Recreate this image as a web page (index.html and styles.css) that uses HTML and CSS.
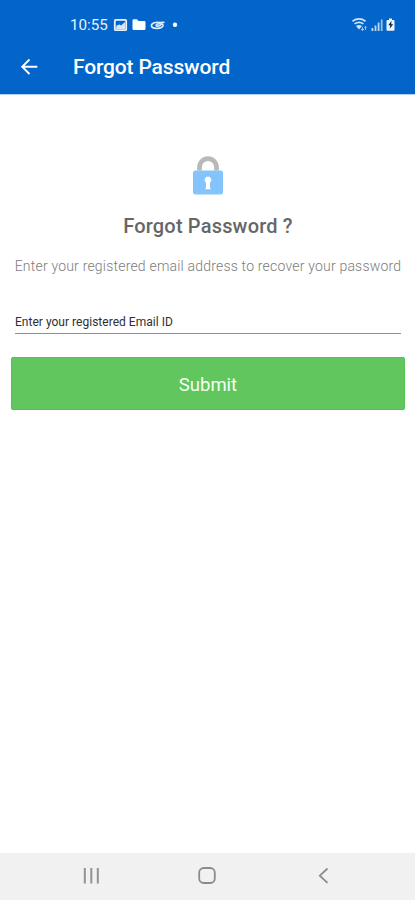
FILE: index.html
```html
<!DOCTYPE html>
<html lang="en">
<head>
<meta charset="utf-8">
<title>Forgot Password</title>
<link rel="stylesheet" href="styles.css">
</head>
<body>
<div class="screen">
  <header class="top">
    <div class="status">
      <span class="clock">10:55</span>
      <svg class="notices" width="68" height="16" viewBox="0 0 68 16">
        <rect x="1.800" y="2.800" width="11.400" height="10.400" rx="1" fill="none" stroke="#e8f2fc" stroke-width="1.800"/>
        <path d="M3 12l.500-3.500 3-1 1.500 1 4-3.500v7z" fill="#d5e7f9"/>
        <path d="M19.500 3.500q0-1.200 1.200-1.200h3.300l1.500 1.700h5.700q1.300 0 1.300 1.200v6.500q0 1.300-1.300 1.300H20.700q-1.200 0-1.200-1.300z" fill="#fff"/>
        <path d="M47 5.500C42 4.600 38 6.500 38.500 9c.600 3.300 10.500 3 11.500-.3.600-2.300-6.500-2.700-6.800-.5-.1 1.300 3.500.9 4.300 0M46.500 5.700l4.300-.3" fill="none" stroke="#dcecfb" stroke-width="1.700" stroke-linecap="round"/>
        <circle cx="62" cy="7.700" r="2.200" fill="#fff"/>
      </svg>
      <svg class="signals" width="46" height="16" viewBox="0 0 46 16">
        <g fill="none" stroke="#cfe4f8" stroke-width="1.700">
          <path d="M.5 4.200q6.500-4.600 13 0M2.500 6.900q4.500-3.200 9 0"/>
        </g>
        <path d="M4 9q3-2 6 0L7 12.500z" fill="#cfe4f8"/>
        <path d="M10.500 13.500V10M9 12l1.500 1.500L12 12M13.500 13V9.300M12.300 10.500l1.200-1.200 1.200 1.200" fill="none" stroke="#9dc8f0"/>
        <g fill="#b9d7f3"><path d="M19.500 11h1.800v3h-1.800zM22.600 8.500h1.800V14h-1.800zM25.700 5.500h1.800V14h-1.800z"/><path d="M28.800 2.500h1.800V14h-1.800z" opacity=".8"/></g>
        <path d="M37 1.500h3V3h1.500q1 0 1 1v8.800q0 1-1 1h-6q-1 0-1-1V4q0-1 1-1H37z" fill="#eef6fe"/>
        <path d="M39.500 3.700l-3.200 4.600h2l-.6 3.500 3.500-4.500h-2z" fill="#082644"/>
      </svg>
    </div>
    <div class="appbar">
      <svg class="back" width="18" height="18" viewBox="0 0 18 18"><path d="M17.300 8.700H2.500M9.500 1.500L2.200 8.700l7.300 7.300" fill="none" stroke="#fff" stroke-width="1.900"/></svg>
      <h1 class="title">Forgot Password</h1>
    </div>
  </header>
  <main class="content">
    <svg class="lock" width="30" height="40" viewBox="0 0 30 40">
      <path d="M6.500 14.500v-3.500a8.500 8.300 0 0 1 17 0v3.500" fill="none" stroke="#b9b9b9" stroke-width="4.800"/>
      <rect x="0" y="14.500" width="30" height="24" rx="2.500" fill="#85c3fc"/>
      <path d="M15 20.500a3.500 3.500 0 0 1 2 6.300v4.700l.8 1.800h-5.600l.8-1.800v-4.700A3.500 3.500 0 0 1 15 20.500z" fill="#fff"/>
    </svg>
    <h2 class="heading">Forgot Password ?</h2>
    <p class="hint">Enter your registered email address to recover your password</p>
    <div class="field">Enter your registered Email ID</div>
    <button class="submit" type="button">Submit</button>
  </main>
  <nav class="navbar">
    <svg width="18" height="18" viewBox="0 0 18 18"><path d="M2.800 1v15.500M9.300 1v15.500M15.800 1v15.500" stroke="#929292" stroke-width="2"/></svg>
    <svg width="18" height="18" viewBox="0 0 18 18"><rect x="1.200" y="1" width="15.600" height="15" rx="4.500" fill="none" stroke="#8b8b8b" stroke-width="1.800"/></svg>
    <svg width="18" height="18" viewBox="0 0 18 18"><path d="M13.500 1.500L5.800 8.700l7.700 7.200" fill="none" stroke="#8b8b8b" stroke-width="1.800"/></svg>
  </nav>
</div>
</body>
</html>
```
FILE: styles.css
```css
* { box-sizing: border-box; }
body { margin: 0; font-family: Roboto, sans-serif; }
h1, h2, p { margin: 0; white-space: nowrap; }
svg { display: block; flex: none; }
.screen { width: 415px; height: 900px; display: flex; flex-direction: column; background: #fff; }
.top { height: 95px; flex: none; background: #0364c9; background-clip: padding-box; border-bottom: 1px solid #b4d0ef; color: #fff; }
.status { height: 40px; padding: 9px 17px 0 70px; display: flex; align-items: center; color: #e6f1fc; }
.clock { font-size: 15.2px; line-height: 20px; width: 43px; }
.signals { margin-left: auto; }
.appbar { height: 54px; display: flex; align-items: center; padding-left: 20px; }
.title { margin-left: 35px; font-size: 21px; font-weight: 500; line-height: 28px; letter-spacing: -0.15px; }
.content { flex: 1; display: flex; flex-direction: column; align-items: center; padding: 61px 10px 0 11px; }
.lock { height: 40px; }
.heading { margin-top: 16px; font-size: 20px; line-height: 28px; font-weight: 500; letter-spacing: 0.18px; color: #666; }
.hint { margin-top: 16px; font-size: 14px; line-height: 20px; letter-spacing: 0.2px; color: #7c7c7c; font-weight: 300; }
.field { align-self: stretch; margin: 34px 4px 0; height: 24px; border-bottom: 1px solid #929292; font-size: 12px; line-height: 24px; letter-spacing: 0.02px; color: #303030; }
.submit { align-self: stretch; height: 53px; margin-top: 23px; padding: 2px 0 0; border: 1px solid #55c153; border-radius: 2px; background: #61c65e; color: #f5fff3; font: 400 18.5px Roboto, sans-serif; }
.navbar { height: 47px; flex: none; background: #f1f1f1; display: flex; justify-content: space-between; align-items: center; padding: 0 83px 2px 82px; }
```
